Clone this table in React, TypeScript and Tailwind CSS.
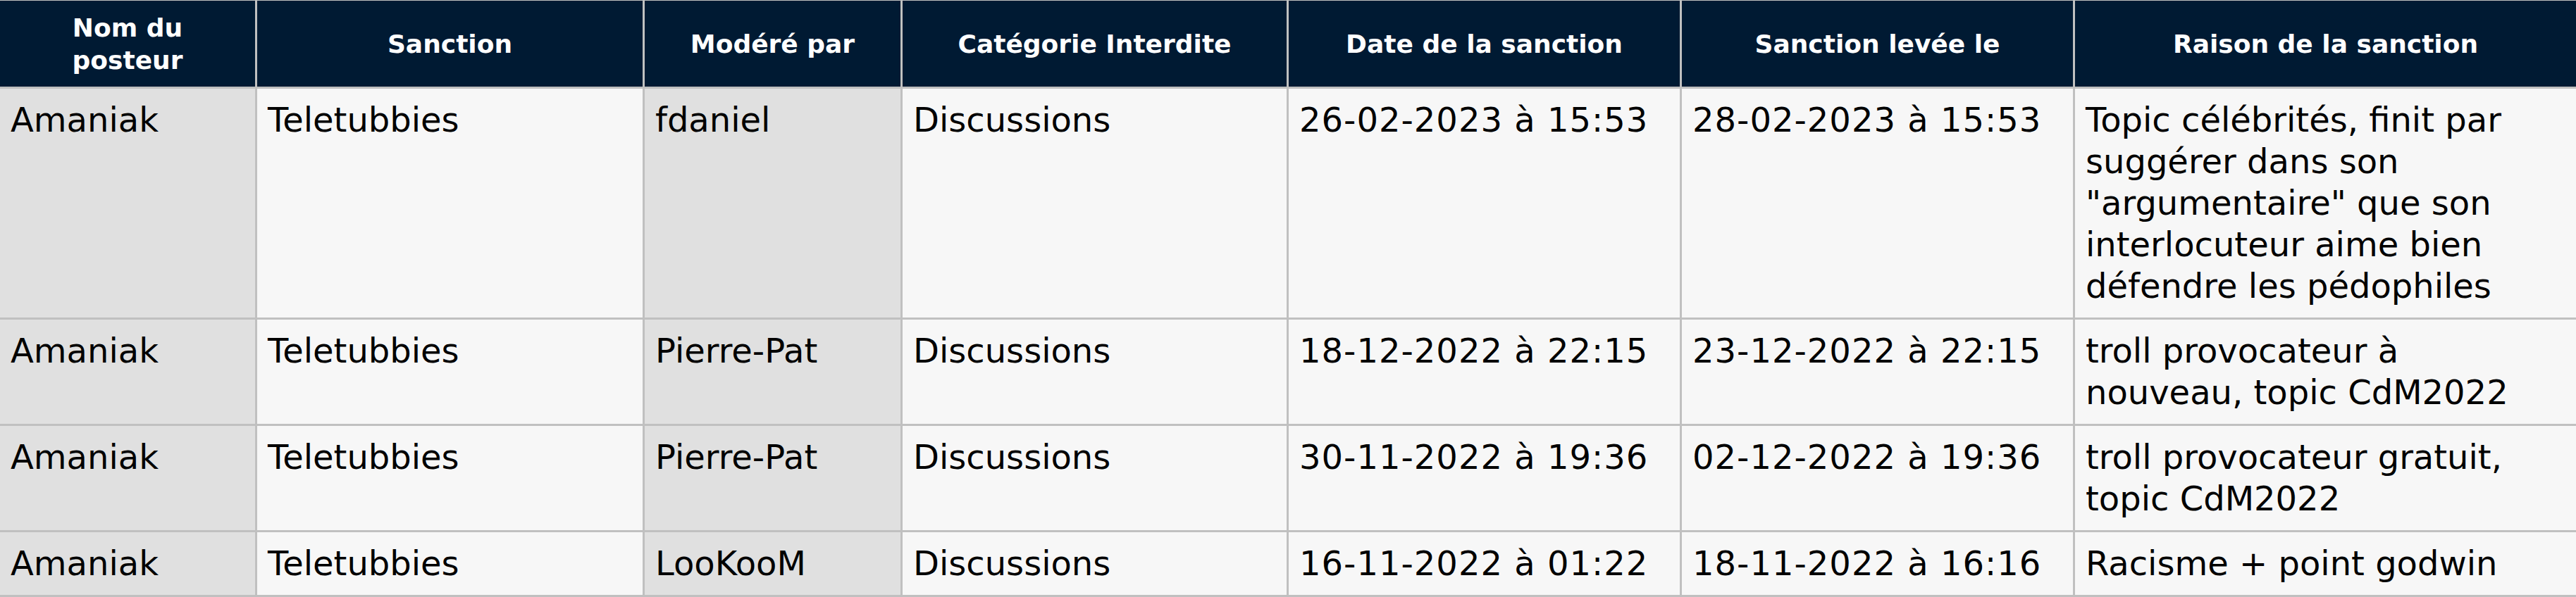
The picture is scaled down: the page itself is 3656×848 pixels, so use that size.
const headers = [
  ['Nom du', 'posteur'],
  ['Sanction'],
  ['Modéré par'],
  ['Catégorie Interdite'],
  ['Date de la sanction'],
  ['Sanction levée le'],
  ['Raison de la sanction'],
]

type Sanction = {
  poster: string
  sanction: string
  moderator: string
  category: string
  date: string
  liftedOn: string
  reason: string
}

const rows: Sanction[] = [
  {
    poster: 'Amaniak',
    sanction: 'Teletubbies',
    moderator: 'fdaniel',
    category: 'Discussions',
    date: '26-02-2023 à 15:53',
    liftedOn: '28-02-2023 à 15:53',
    reason:
      'Topic célébrités, finit par suggérer dans son "argumentaire" que son interlocuteur aime bien défendre les pédophiles',
  },
  {
    poster: 'Amaniak',
    sanction: 'Teletubbies',
    moderator: 'Pierre-Pat',
    category: 'Discussions',
    date: '18-12-2022 à 22:15',
    liftedOn: '23-12-2022 à 22:15',
    reason: 'troll provocateur à nouveau, topic CdM2022',
  },
  {
    poster: 'Amaniak',
    sanction: 'Teletubbies',
    moderator: 'Pierre-Pat',
    category: 'Discussions',
    date: '30-11-2022 à 19:36',
    liftedOn: '02-12-2022 à 19:36',
    reason: 'troll provocateur gratuit, topic CdM2022',
  },
  {
    poster: 'Amaniak',
    sanction: 'Teletubbies',
    moderator: 'LooKooM',
    category: 'Discussions',
    date: '16-11-2022 à 01:22',
    liftedOn: '18-11-2022 à 16:16',
    reason: 'Racisme + point godwin',
  },
]

// Columns 1 and 3 get the darker grey background
const light = 'bg-[#f7f7f7]'
const dark = 'bg-[#e0e0e0]'

export default function App() {
  return (
    <div className="w-[3656px] bg-[#c0c0c0] pt-px pb-[3px] font-['DejaVu_Sans','Verdana',sans-serif]">
      <div className="grid grid-cols-[362px_547px_363px_545px_555px_555px_1fr] gap-[3px]">
        {headers.map((lines, i) => (
          <div
            key={i}
            className="flex flex-col items-center justify-center bg-[#001a33] px-[15px] pt-[16px] pb-[14px] text-center text-[36px] leading-[46px] font-bold text-white"
          >
            {lines.map((l) => (
              <span key={l}>{l}</span>
            ))}
          </div>
        ))}

        {rows.map((r, i) => {
          const cells = [r.poster, r.sanction, r.moderator, r.category, r.date, r.liftedOn, r.reason]
          return cells.map((c, j) => (
            <div
              key={`${i}-${j}`}
              className={`${j === 0 || j === 2 ? dark : light} ${j === 4 || j === 5 ? 'tracking-[1px]' : ''} px-[15px] py-[15px] text-[48px] leading-[59px] text-black`}
            >
              {c}
            </div>
          ))
        })}
      </div>
    </div>
  )
}
